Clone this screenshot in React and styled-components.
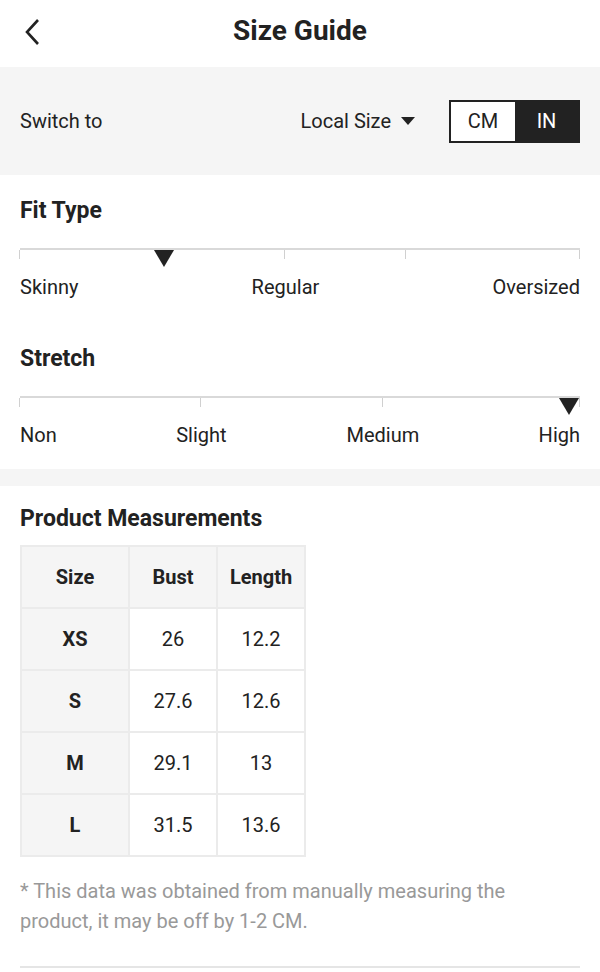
import React from "react";
import styled, { createGlobalStyle } from "styled-components";

const GlobalStyle = createGlobalStyle`
    body {
        margin: 0;
        background: #ffffff;
        font-family: Roboto, "Noto Sans", sans-serif;
        color: #222222;
    }
    * {
        box-sizing: border-box;
    }
`

const fitScale = {
    title: "Fit Type",
    ticks: [0, 47.4, 68.9, 100],
    marker: 25.7,
    labels: [
        { text: "Skinny", at: 0 },
        { text: "Regular", at: 47.4 },
        { text: "Oversized", at: 100 },
    ],
};

const stretchScale = {
    title: "Stretch",
    ticks: [0, 32.4, 64.8, 100],
    marker: 98,
    labels: [
        { text: "Non", at: 0 },
        { text: "Slight", at: 32.4 },
        { text: "Medium", at: 64.8 },
        { text: "High", at: 100 },
    ],
};

const rows = [
    ["XS", "26", "12.2"],
    ["S", "27.6", "12.6"],
    ["M", "29.1", "13"],
    ["L", "31.5", "13.6"],
];

function Scale ({ scale }) {
    return (
        <ScaleBlock>
            <SectionTitle>{scale.title}</SectionTitle>
            <Track>
                {scale.ticks.map(t => <Tick key={t} style={{ left: `${t}%` }} />)}
                <Marker style={{ left: `${scale.marker}%` }} />
            </Track>
            <Labels>
                {scale.labels.map(l => (
                    <Label
                        key={l.text}
                        align={l.at === 0 ? "left" : l.at === 100 ? "right" : "center"}
                        style={{ left: `${l.at}%` }}
                    >
                        {l.text}
                    </Label>
                ))}
            </Labels>
        </ScaleBlock>
    );
}

export default function App () {
    return (
        <>
            <GlobalStyle />
            <Header>
                <BackButton>
                    <svg width="20" height="30" viewBox="0 0 20 30">
                        <path d="M16 3 L5 15 L16 27" fill="none" stroke="#222" strokeWidth="2.6" />
                    </svg>
                </BackButton>
                <Title>Size Guide</Title>
            </Header>
            <SwitchBar>
                <span>Switch to</span>
                <Right>
                    <Dropdown>
                        Local Size
                        <svg width="14" height="8" viewBox="0 0 14 8">
                            <path d="M0 0 H14 L7 8 Z" fill="#222" />
                        </svg>
                    </Dropdown>
                    <Toggle>
                        <ToggleOption>CM</ToggleOption>
                        <ToggleOption active>IN</ToggleOption>
                    </Toggle>
                </Right>
            </SwitchBar>
            <FitSection>
                <Scale scale={fitScale} />
                <Scale scale={stretchScale} />
            </FitSection>
            <Divider />
            <Measurements>
                <SectionTitle>Product Measurements</SectionTitle>
                <Table>
                    <thead>
                        <tr>
                            <HeadCell>Size</HeadCell>
                            <HeadCell>Bust</HeadCell>
                            <HeadCell>Length</HeadCell>
                        </tr>
                    </thead>
                    <tbody>
                        {rows.map(r => (
                            <tr key={r[0]}>
                                <HeadCell>{r[0]}</HeadCell>
                                <Cell>{r[1]}</Cell>
                                <Cell>{r[2]}</Cell>
                            </tr>
                        ))}
                    </tbody>
                </Table>
                <Note>* This data was obtained from manually measuring the product, it may be off by 1-2 CM.</Note>
                <BottomLine />
            </Measurements>
        </>
    );
}

const Header = styled.div`
    position: relative;
    height: 67px;
    display: flex;
    align-items: center;
    justify-content: center;
`

const BackButton = styled.div`
    position: absolute;
    left: 22px;
    top: 17px;
    display: flex;
`

const Title = styled.h1`
    margin: 0;
    font-size: 28px;
    font-weight: 700;
    color: #222;
    padding-bottom: 6px;
`

const SwitchBar = styled.div`
    height: 108px;
    background-color: #f5f5f5;
    display: flex;
    align-items: center;
    justify-content: space-between;
    padding: 0 20px;
    font-size: 20px;
    color: #222;
`

const Right = styled.div`
    display: flex;
    align-items: center;
    gap: 34px;
`

const Dropdown = styled.div`
    display: flex;
    align-items: center;
    gap: 10px;
`

const Toggle = styled.div`
    display: flex;
    border: 2px solid #222;
    height: 43px;
`

const ToggleOption = styled.div`
    width: ${props => props.active ? "63px" : "64px"};
    display: flex;
    align-items: center;
    justify-content: center;
    background-color: ${props => props.active ? "#222" : "#fff"};
    color: ${props => props.active ? "#fff" : "#222"};
    font-size: 20px;
`

const FitSection = styled.div`
    padding: 23px 20px 22px;
    display: flex;
    flex-direction: column;
    gap: 47px;
`

const ScaleBlock = styled.div`
    display: flex;
    flex-direction: column;
`

const SectionTitle = styled.h2`
    margin: 0;
    font-size: 23px;
    line-height: 26px;
    font-weight: 700;
    color: #222;
`

const Track = styled.div`
    position: relative;
    margin-top: 24px;
    height: 10px;
    border-top: 2px solid #d9d9d9;
`

const Tick = styled.span`
    position: absolute;
    top: 0;
    width: 1px;
    height: 9px;
    margin-left: -1px;
    background-color: #d0d0d0;
`

const Marker = styled.span`
    position: absolute;
    top: 0;
    width: 0;
    height: 0;
    transform: translateX(-50%);
    border-left: 10px solid transparent;
    border-right: 10px solid transparent;
    border-top: 17px solid #222;
`

const Labels = styled.div`
    position: relative;
    height: 23px;
    line-height: 23px;
    margin-top: 18px;
    font-size: 20px;
`

const Label = styled.span`
    position: absolute;
    top: 0;
    white-space: nowrap;
    transform: ${props => props.align === "left" ? "none" : props.align === "right" ? "translateX(-100%)" : "translateX(-50%)"};
`

const Divider = styled.div`
    height: 17px;
    background-color: #f5f5f5;
`

const Measurements = styled.div`
    padding: 20px 20px 0;
`

const Table = styled.table`
    margin-top: 13px;
    border-collapse: collapse;
    font-size: 20px;

    td, th {
        border: 2px solid #ebebeb;
        height: 62px;
        text-align: center;
    }
`

const HeadCell = styled.th`
    background-color: #f5f5f5;
    font-weight: 700;
    color: #222;
    width: 108px;

    & + & {
        width: 88px;
    }
`

const Cell = styled.td`
    width: 88px;
    color: #222;
`

const Note = styled.p`
    margin: 19px 0 0;
    max-width: 500px;
    font-size: 20px;
    line-height: 30px;
    color: #999;
`

const BottomLine = styled.div`
    margin-top: 30px;
    height: 2px;
    background-color: #e5e5e5;
`
